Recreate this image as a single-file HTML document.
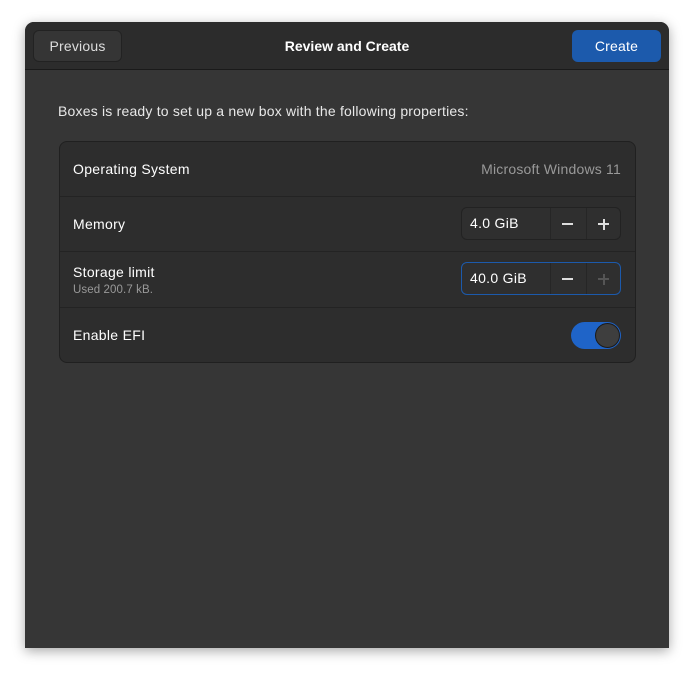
<!DOCTYPE html>
<html><head><style>
*{box-sizing:border-box;margin:0;padding:0}
body{width:694px;height:677px;background:#fff;font-family:"Liberation Sans",sans-serif;position:relative;overflow:hidden;color:#fff}
.win{position:absolute;left:25px;top:22px;width:644px;height:626px;background:#363636;border-radius:9px 9px 0 0;box-shadow:0 3px 12px rgba(0,0,0,.35);overflow:hidden}
.hdr{position:absolute;left:0;top:0;width:644px;height:48px;background:#2c2c2c;border-bottom:1px solid #1a1a1a}
.btn{position:absolute;top:8px;height:32px;border-radius:6px;font-size:14px;letter-spacing:.2px;display:flex;align-items:center;justify-content:center}
.prev{left:8px;width:89px;background:#353535;border:1px solid #222;color:#ddd}
.create{left:547px;width:89px;background:#1c5aac;color:#fff}
.title{position:absolute;top:0;left:0;width:644px;text-align:center;line-height:48px;font-size:14px;font-weight:bold;letter-spacing:0}
.intro{position:absolute;left:33px;top:81px;font-size:14px;letter-spacing:.2px;color:#e8e8e8}
.card{position:absolute;left:34px;top:119px;width:577px;height:222px;background:#2d2d2d;border:1px solid #202020;border-radius:8px}
.row{position:absolute;left:0;width:575px;border-bottom:1px solid #232323;font-size:14px;letter-spacing:.3px}
.lab{position:absolute;left:13px}
.sub{position:absolute;left:13px;font-size:11.5px;color:#999;letter-spacing:.1px}
.spin{position:absolute;left:401px;width:160px;height:33px;border-radius:6px;background:#2f2f2f;border:1px solid #222}
.spin .v{position:absolute;left:8px;top:7px;font-size:14px}
.spin .d1{position:absolute;left:88px;top:0;width:1px;height:31px;background:#262626}
.spin .d2{position:absolute;left:124px;top:0;width:1px;height:31px;background:#262626}
.spin .m{position:absolute;left:100px;top:15px;width:11px;height:2px;background:#ddd}
.spin .p1{position:absolute;left:136px;top:15px;width:11px;height:2px;background:#ddd}
.spin .p2{position:absolute;left:140.5px;top:10.5px;width:2px;height:11px;background:#ddd}
</style></head><body>
<div class="win">
 <div class="hdr">
  <div class="title">Review and Create</div>
  <div class="btn prev">Previous</div>
  <div class="btn create">Create</div>
 </div>
 <div class="intro">Boxes is ready to set up a new box with the following properties:</div>
 <div class="card">
  <div class="row" style="top:0;height:55px"><span class="lab" style="top:19px">Operating System</span><span style="position:absolute;right:14px;top:19px;color:#999;letter-spacing:.2px">Microsoft Windows 11</span></div>
  <div class="row" style="top:55px;height:55px"><span class="lab" style="top:19px">Memory</span>
   <div class="spin" style="top:10px"><span class="v">4.0 GiB</span><div class="d1"></div><div class="d2"></div><div class="m"></div><div class="p1"></div><div class="p2"></div></div></div>
  <div class="row" style="top:110px;height:56px"><span class="lab" style="top:12px">Storage limit</span><span class="sub" style="top:32px">Used 200.7 kB.</span>
   <div class="spin" style="top:10px;border:1.5px solid #1c5aac"><span class="v">40.0 GiB</span><div class="d1"></div><div class="d2"></div><div class="m"></div><div class="p1" style="background:#555"></div><div class="p2" style="background:#555"></div></div></div>
  <div class="row" style="top:166px;height:55px;border:none"><span class="lab" style="top:19px">Enable EFI</span>
   <div style="position:absolute;left:511px;top:14px;width:50px;height:27px;border-radius:14px;background:#1f64c8"></div>
   <div style="position:absolute;left:535px;top:15px;width:25px;height:25px;border-radius:50%;background:#3e3e3e;border:1px solid #1a1a1a"></div>
  </div>
 </div>
</div>
</body></html>
